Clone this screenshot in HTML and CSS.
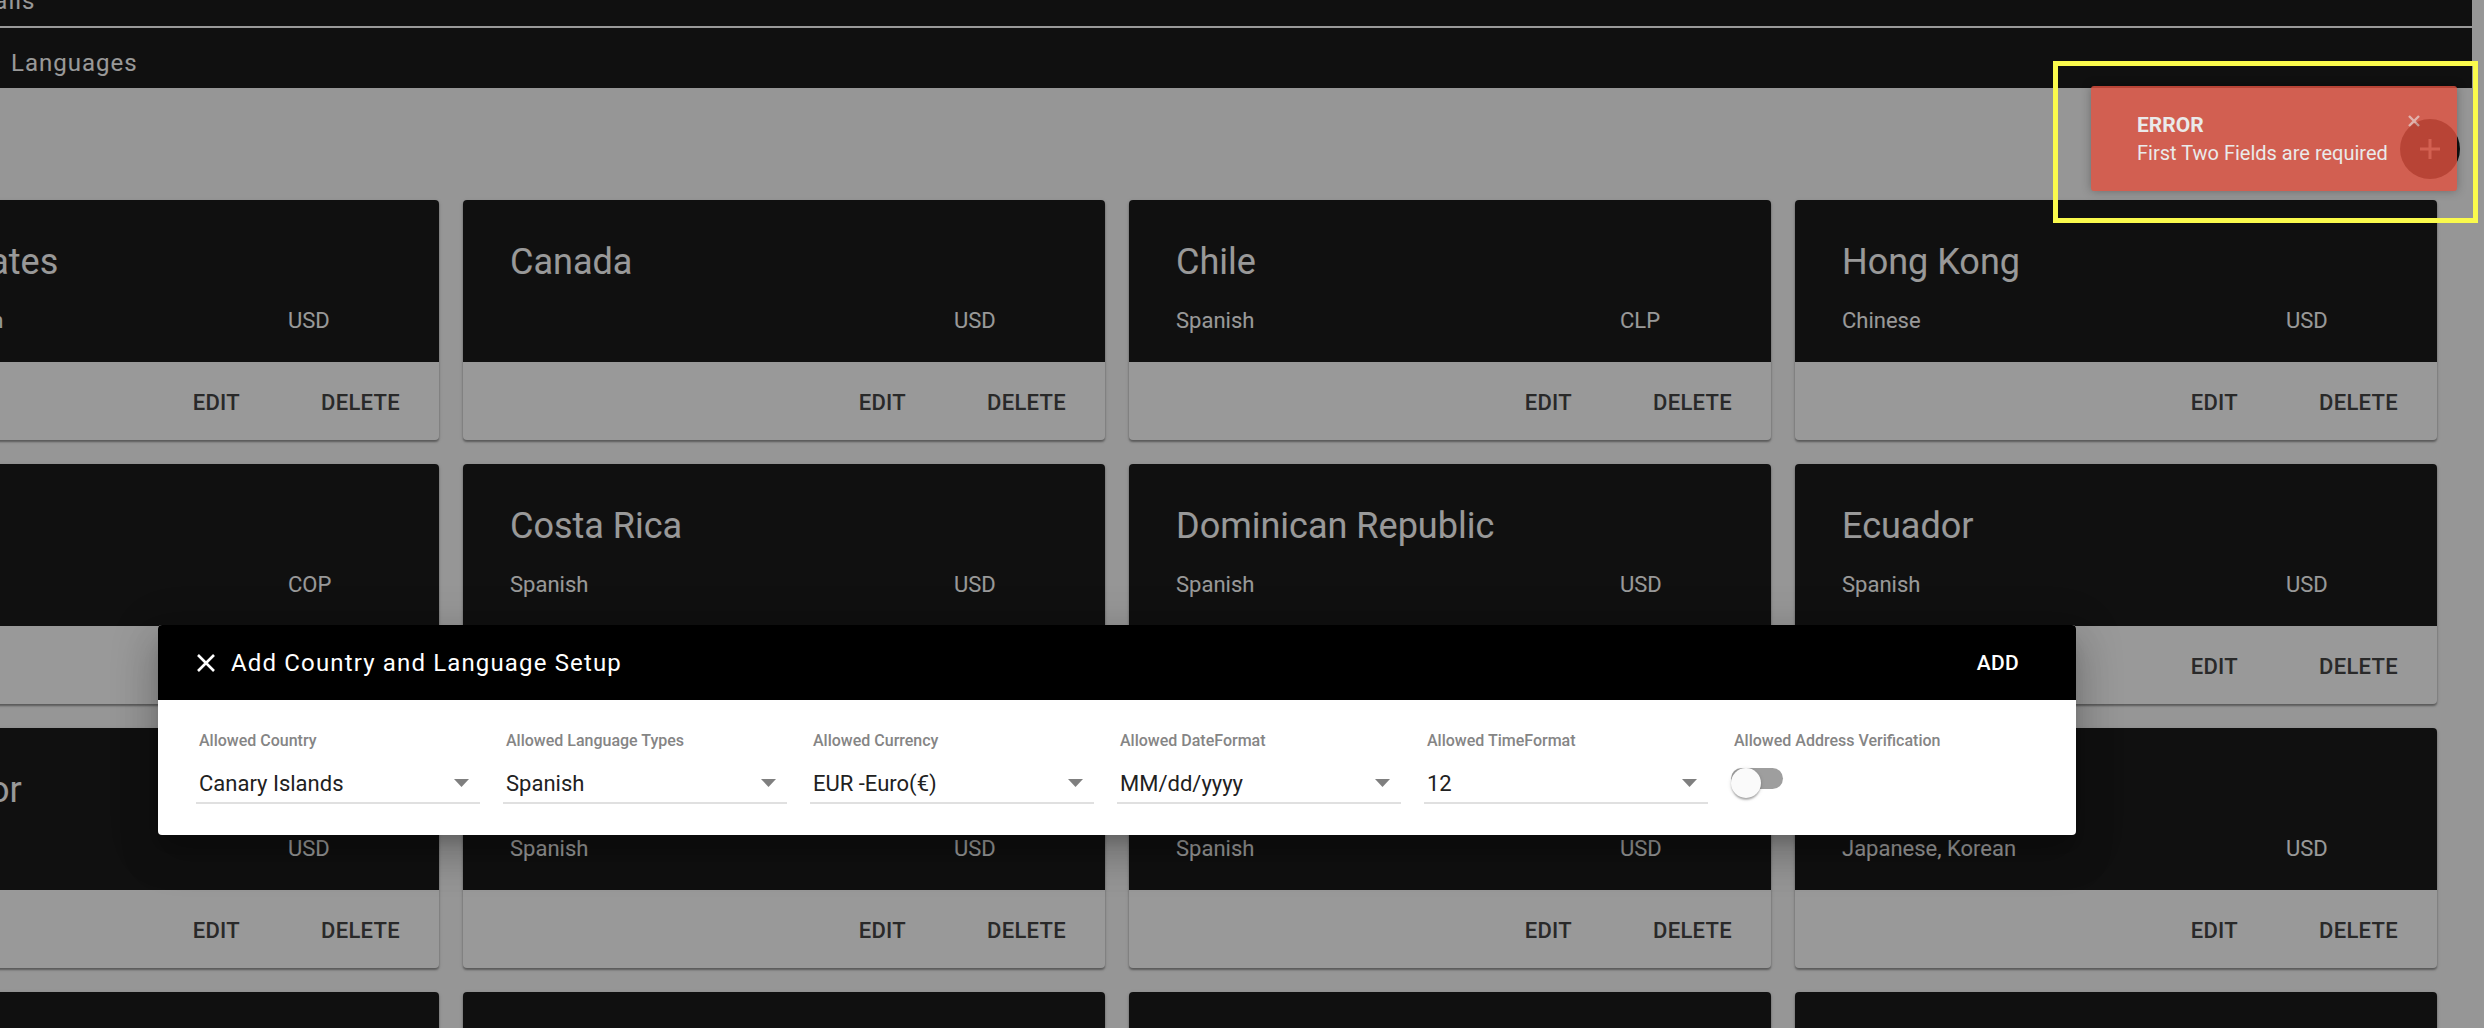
FILE: index.html
```html
<!DOCTYPE html>
<html lang="en">
<head>
<meta charset="utf-8">
<title>Countries and Languages</title>
<link rel="stylesheet" href="styles.css">
</head>
<body>
<div class="page">
  <nav class="tabs">
    <div class="tab tab-first">Details</div>
    <div class="tab">Languages</div>
  </nav>

  <main class="grid">
    <div class="card"><div class="card-head"><div class="card-title">United States</div><div class="card-meta"><span>English, Spanish</span><span>USD</span></div></div><div class="card-actions"><span class="btn">EDIT</span><span class="btn">DELETE</span></div></div>
    <div class="card"><div class="card-head"><div class="card-title">Canada</div><div class="card-meta"><span>&nbsp;</span><span>USD</span></div></div><div class="card-actions"><span class="btn">EDIT</span><span class="btn">DELETE</span></div></div>
    <div class="card"><div class="card-head"><div class="card-title">Chile</div><div class="card-meta"><span>Spanish</span><span>CLP</span></div></div><div class="card-actions"><span class="btn">EDIT</span><span class="btn">DELETE</span></div></div>
    <div class="card"><div class="card-head"><div class="card-title">Hong Kong</div><div class="card-meta"><span>Chinese</span><span>USD</span></div></div><div class="card-actions"><span class="btn">EDIT</span><span class="btn">DELETE</span></div></div>

    <div class="card"><div class="card-head"><div class="card-title">Colombia</div><div class="card-meta"><span>Spanish</span><span>COP</span></div></div><div class="card-actions"><span class="btn">EDIT</span><span class="btn">DELETE</span></div></div>
    <div class="card"><div class="card-head"><div class="card-title">Costa Rica</div><div class="card-meta"><span>Spanish</span><span>USD</span></div></div><div class="card-actions"><span class="btn">EDIT</span><span class="btn">DELETE</span></div></div>
    <div class="card"><div class="card-head"><div class="card-title">Dominican Republic</div><div class="card-meta"><span>Spanish</span><span>USD</span></div></div><div class="card-actions"><span class="btn">EDIT</span><span class="btn">DELETE</span></div></div>
    <div class="card"><div class="card-head"><div class="card-title">Ecuador</div><div class="card-meta"><span>Spanish</span><span>USD</span></div></div><div class="card-actions"><span class="btn">EDIT</span><span class="btn">DELETE</span></div></div>

    <div class="card"><div class="card-head"><div class="card-title">El Salvador</div><div class="card-meta"><span>Spanish</span><span>USD</span></div></div><div class="card-actions"><span class="btn">EDIT</span><span class="btn">DELETE</span></div></div>
    <div class="card"><div class="card-head"><div class="card-title">Guatemala</div><div class="card-meta"><span>Spanish</span><span>USD</span></div></div><div class="card-actions"><span class="btn">EDIT</span><span class="btn">DELETE</span></div></div>
    <div class="card"><div class="card-head"><div class="card-title">Honduras</div><div class="card-meta"><span>Spanish</span><span>USD</span></div></div><div class="card-actions"><span class="btn">EDIT</span><span class="btn">DELETE</span></div></div>
    <div class="card"><div class="card-head"><div class="card-title">Japan</div><div class="card-meta"><span>Japanese, Korean</span><span>USD</span></div></div><div class="card-actions"><span class="btn">EDIT</span><span class="btn">DELETE</span></div></div>

    <div class="card"><div class="card-head"><div class="card-title">Mexico</div><div class="card-meta"><span>Spanish</span><span>MXN</span></div></div><div class="card-actions"><span class="btn">EDIT</span><span class="btn">DELETE</span></div></div>
    <div class="card"><div class="card-head"><div class="card-title">Nicaragua</div><div class="card-meta"><span>Spanish</span><span>USD</span></div></div><div class="card-actions"><span class="btn">EDIT</span><span class="btn">DELETE</span></div></div>
    <div class="card"><div class="card-head"><div class="card-title">Panama</div><div class="card-meta"><span>Spanish</span><span>USD</span></div></div><div class="card-actions"><span class="btn">EDIT</span><span class="btn">DELETE</span></div></div>
    <div class="card"><div class="card-head"><div class="card-title">Peru</div><div class="card-meta"><span>Spanish</span><span>PEN</span></div></div><div class="card-actions"><span class="btn">EDIT</span><span class="btn">DELETE</span></div></div>
  </main>

  <button class="fab" type="button" aria-label="Add">
    <svg width="22" height="22" viewBox="0 0 22 22"><path d="M11 1v20M1 11h20" stroke="#fff" stroke-width="3" fill="none"/></svg>
  </button>
</div>

<div class="backdrop"></div>

<div class="dialog">
  <div class="dialog-head">
    <svg class="dialog-close" width="20" height="20" viewBox="0 0 20 20"><path d="M2 2L18 18M18 2L2 18" stroke="#fff" stroke-width="2.6" fill="none"/></svg>
    <div class="dialog-title">Add Country and Language Setup</div>
    <div class="dialog-add">ADD</div>
  </div>
  <div class="dialog-body">
    <div class="field">
      <div class="field-label">Allowed Country</div>
      <div class="select"><span class="select-value">Canary Islands</span><svg class="arrow" width="15" height="8" viewBox="0 0 15 8"><path d="M0 0h15L7.5 8z" fill="#7f7f7f"/></svg></div>
    </div>
    <div class="field">
      <div class="field-label">Allowed Language Types</div>
      <div class="select"><span class="select-value">Spanish</span><svg class="arrow" width="15" height="8" viewBox="0 0 15 8"><path d="M0 0h15L7.5 8z" fill="#7f7f7f"/></svg></div>
    </div>
    <div class="field">
      <div class="field-label">Allowed Currency</div>
      <div class="select"><span class="select-value">EUR -Euro(€)</span><svg class="arrow" width="15" height="8" viewBox="0 0 15 8"><path d="M0 0h15L7.5 8z" fill="#7f7f7f"/></svg></div>
    </div>
    <div class="field">
      <div class="field-label">Allowed DateFormat</div>
      <div class="select"><span class="select-value">MM/dd/yyyy</span><svg class="arrow" width="15" height="8" viewBox="0 0 15 8"><path d="M0 0h15L7.5 8z" fill="#7f7f7f"/></svg></div>
    </div>
    <div class="field">
      <div class="field-label">Allowed TimeFormat</div>
      <div class="select"><span class="select-value">12</span><svg class="arrow" width="15" height="8" viewBox="0 0 15 8"><path d="M0 0h15L7.5 8z" fill="#7f7f7f"/></svg></div>
    </div>
    <div class="field field-toggle">
      <div class="field-label">Allowed Address Verification</div>
      <div class="toggle"><div class="toggle-track"></div><div class="toggle-thumb"></div></div>
    </div>
  </div>
</div>

<div class="toast">
  <svg class="toast-close" width="12" height="12" viewBox="0 0 12 12"><path d="M1 1L11 11M11 1L1 11" stroke="#fff" stroke-width="2.4" fill="none"/></svg>
  <div class="toast-title">ERROR</div>
  <div class="toast-msg">First Two Fields are required</div>
</div>

<div class="highlight"></div>
</body>
</html>
```

FILE: styles.css
```css
* { box-sizing: border-box; }

html, body {
  margin: 0;
  padding: 0;
  width: 2484px;
  height: 1028px;
  overflow: hidden;
  background: #fafafa;
  font-family: Roboto, "Noto Sans", "Liberation Sans", sans-serif;
}

.page {
  position: relative;
  width: 2484px;
  height: 1028px;
  overflow: hidden;
}

/* top navigation */
.tabs {
  width: 2472px;
  margin-top: -34px;
  background: #1c1c1c;
}

.tab {
  height: 60px;
  padding: 21px 0 0 11px;
  color: #fff;
  font-size: 24px;
  letter-spacing: 1px;
  white-space: nowrap;
  overflow: hidden;
}

.tab-first {
  height: 62px;
  border-bottom: 2px solid #fff;
  padding-left: 0;
  text-indent: -45px;
}

/* cards grid */
.grid {
  display: grid;
  grid-template-columns: repeat(4, 642px);
  column-gap: 24px;
  row-gap: 24px;
  margin: 112px 0 0 -203px;
}

.card {
  height: 240px;
  background: #fff;
  border-radius: 4px;
  overflow: hidden;
  box-shadow: 0 2px 2px rgba(0, 0, 0, 0.35), 0 1px 4px rgba(0, 0, 0, 0.12);
}

.card-head {
  height: 162px;
  background: #1c1c1c;
  padding: 41px 0 0 47px;
  color: #fff;
}

.card-title {
  font-size: 36px;
  line-height: 42px;
  white-space: nowrap;
}

.card-meta {
  display: grid;
  grid-template-columns: 444px auto;
  margin-top: 25px;
  font-size: 22px;
  line-height: 26px;
  white-space: nowrap;
}

.card-actions {
  height: 78px;
  display: flex;
  justify-content: flex-end;
  align-items: center;
  gap: 81px;
  padding: 4px 39px 0 0;
}

.btn {
  font-size: 22px;
  line-height: 26px;
  font-weight: 500;
  letter-spacing: 0.3px;
  color: #454545;
}

/* floating action button (under backdrop) */
.fab {
  position: absolute;
  left: 2400px;
  top: 119px;
  width: 60px;
  height: 60px;
  border: none;
  border-radius: 50%;
  background: #1c1c1c;
  display: flex;
  align-items: center;
  justify-content: center;
  padding: 0;
}

/* modal backdrop */
.backdrop {
  position: absolute;
  left: 0;
  top: 0;
  width: 2484px;
  height: 1028px;
  background: rgba(0, 0, 0, 0.4);
}

/* dialog */
.dialog {
  position: absolute;
  left: 158px;
  top: 625px;
  width: 1918px;
  border-radius: 4px;
  overflow: hidden;
  background: #fff;
  box-shadow: 0 11px 15px -7px rgba(0, 0, 0, 0.2), 0 24px 38px 3px rgba(0, 0, 0, 0.14), 0 9px 46px 8px rgba(0, 0, 0, 0.12);
}

.dialog-head {
  height: 75px;
  background: #000;
  display: flex;
  align-items: center;
  padding: 0 57px 0 38px;
  color: #fff;
}

.dialog-close {
  flex: none;
  margin-right: 15px;
}

.dialog-title {
  flex: 1;
  font-size: 24px;
  letter-spacing: 1.15px;
  line-height: 28px;
}

.dialog-add {
  font-size: 21px;
  font-weight: 500;
  line-height: 26px;
  letter-spacing: 0.3px;
}

.dialog-body {
  display: flex;
  gap: 23px;
  padding: 31px 38px 31px 38px;
}

.field {
  width: 284px;
  flex: none;
}

.field-label {
  font-size: 16px;
  line-height: 19px;
  font-weight: 500;
  color: #858585;
  padding-left: 3px;
  white-space: nowrap;
}

.select {
  display: flex;
  align-items: center;
  margin-top: 21px;
  padding: 0 11px 5px 3px;
  border-bottom: 2px solid #e0e0e0;
}

.select-value {
  flex: 1;
  font-size: 22px;
  line-height: 26px;
  color: #212121;
  white-space: nowrap;
}

.arrow {
  flex: none;
  margin-top: -2px;
}

.toggle {
  position: relative;
  margin-top: 18px;
  width: 52px;
  height: 30px;
}

.toggle-track {
  margin-top: 5px;
  width: 52px;
  height: 21px;
  border-radius: 11px;
  background: #9e9e9e;
}

.toggle-thumb {
  position: absolute;
  left: 0;
  top: 0;
  width: 30px;
  height: 30px;
  border-radius: 50%;
  background: #fafafa;
  box-shadow: 0 3px 2px -1px rgba(0, 0, 0, 0.2), 0 1px 2px rgba(0, 0, 0, 0.14), 0 1px 4px rgba(0, 0, 0, 0.12);
}

/* toast */
.toast {
  position: absolute;
  left: 2091px;
  top: 86px;
  width: 366px;
  height: 105px;
  padding: 25px 0 0 46px;
  border-radius: 3px;
  background: rgb(226, 82, 64);
  opacity: 0.8;
  color: #fff;
  box-shadow: 0 0 10px rgba(0, 0, 0, 0.35);
}

.toast-title {
  font-size: 21px;
  line-height: 28px;
  font-weight: 700;
}

.toast-msg {
  font-size: 20px;
  line-height: 28px;
  white-space: nowrap;
}

.toast-close {
  position: absolute;
  left: 317px;
  top: 29px;
  opacity: 0.6;
}

/* annotation outline */
.highlight {
  position: absolute;
  left: 2053px;
  top: 61px;
  width: 425px;
  height: 162px;
  border: 5px solid #fafa4c;
}
```
